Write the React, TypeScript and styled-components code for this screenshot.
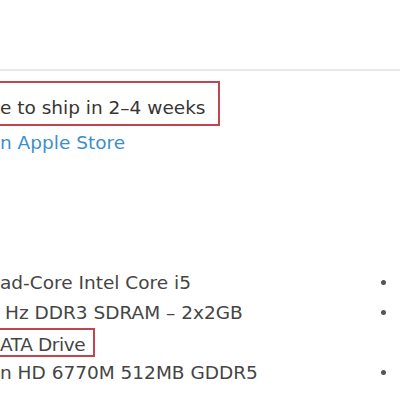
import * as React from "react";
import styled, { createGlobalStyle } from "styled-components";

const GlobalStyle = createGlobalStyle`
  html, body {
    margin: 0;
    padding: 0;
    background: #ffffff;
  }
  body {
    font-family: "DejaVu Sans", "Liberation Sans", sans-serif;
    overflow: hidden;
  }
`;

const Page = styled.div`
  width: 400px;
  height: 400px;
  position: relative;
  overflow: hidden;
  background: #ffffff;
`;

const TopSpace = styled.div`
  height: 69px;
`;

const Divider = styled.div`
  height: 2px;
  background: #e8e8e8;
`;

const Shipping = styled.div`
  padding-top: 10px;
`;

const Highlight = styled.div<{ $width: number; $height: number; $drop?: number }>`
  display: flex;
  align-items: center;
  box-sizing: border-box;
  margin-left: -12px;
  padding-left: 10px;
  padding-top: ${(p) => p.$drop ?? 4}px;
  width: ${(p) => p.$width}px;
  height: ${(p) => p.$height}px;
  border: 2px solid #c2444f;
`;

const ShipText = styled.span`
  font-size: 18.5px;
  color: #363636;
  white-space: nowrap;
`;

const StoreLink = styled.a`
  display: block;
  margin-top: 6px;
  font-size: 18.5px;
  color: #3d8fca;
  text-decoration: none;
  white-space: nowrap;
`;

const SpecList = styled.div`
  margin-top: 114px;
  display: flex;
  flex-direction: column;
`;

const SpecRow = styled.div`
  display: flex;
  align-items: center;
  justify-content: space-between;
  height: 30px;
  padding-right: 14px;
`;

const SpecText = styled.span<{ $indent?: number; $tight?: boolean }>`
  font-size: 18.5px;
  color: #454545;
  white-space: nowrap;
  padding-left: ${(p) => p.$indent ?? 0}px;
  letter-spacing: ${(p) => (p.$tight ? "-0.4px" : "0")};
`;

const Bullet = styled.span<{ $hidden?: boolean }>`
  width: 5px;
  height: 5px;
  border-radius: 50%;
  background: #555555;
  visibility: ${(p) => (p.$hidden ? "hidden" : "visible")};
`;

const specs = [
  { text: "ad-Core Intel Core i5", indent: 0, bullet: true, boxed: false },
  { text: "Hz DDR3 SDRAM – 2x2GB", indent: 5, bullet: true, boxed: false },
  { text: "ATA Drive", indent: 0, bullet: false, boxed: true },
  { text: "n HD 6770M 512MB GDDR5", indent: 0, bullet: true, boxed: false },
];

export default function App() {
  return (
    <Page>
      <GlobalStyle />
      <TopSpace />
      <Divider />
      <Shipping>
        <Highlight $width={232} $height={45} $drop={7}>
          <ShipText>e to ship in 2–4 weeks</ShipText>
        </Highlight>
        <StoreLink href="#">n Apple Store</StoreLink>
      </Shipping>
      <SpecList>
        {specs.map((s) => (
          <SpecRow key={s.text}>
            {s.boxed ? (
              <Highlight $width={107} $height={29}>
                <SpecText $tight>{s.text}</SpecText>
              </Highlight>
            ) : (
              <SpecText $indent={s.indent}>{s.text}</SpecText>
            )}
            <Bullet $hidden={!s.bullet} />
          </SpecRow>
        ))}
      </SpecList>
    </Page>
  );
}
